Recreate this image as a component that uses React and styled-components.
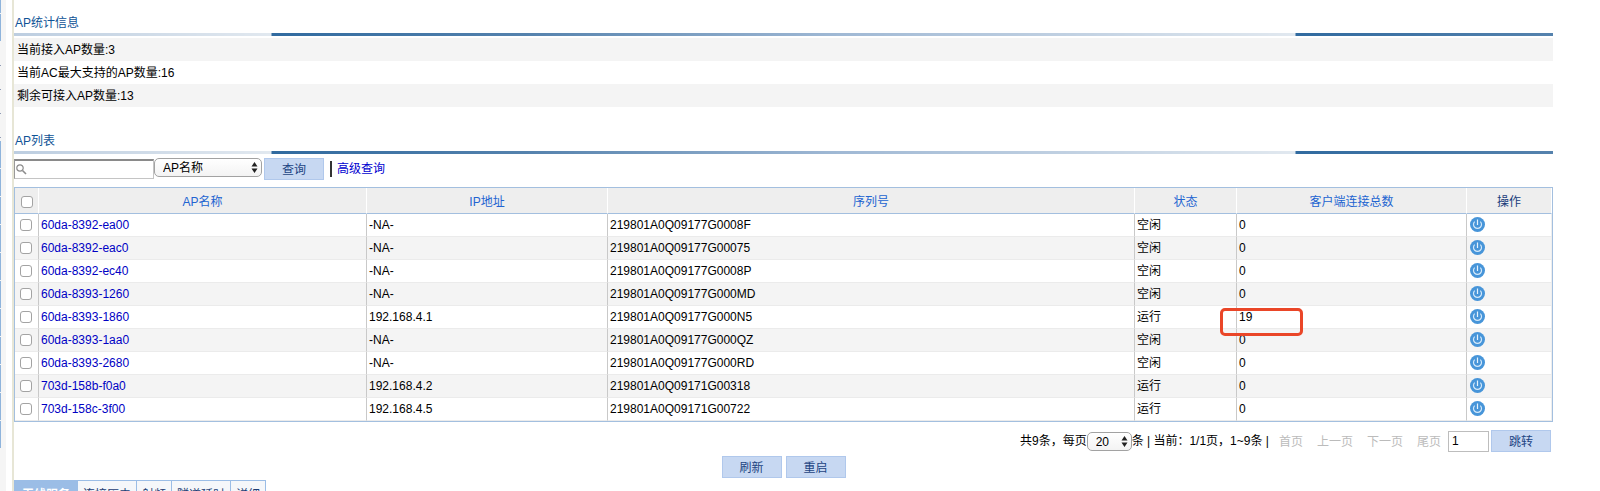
import { useState } from "react"
import styled, { createGlobalStyle, css } from "styled-components"

const GlobalStyle = createGlobalStyle`
  * {
    box-sizing: border-box;
  }

  body {
    margin: 0;
    background: #fff;
    color: #000;
  }

  body, button, input, select {
    font-family: "Liberation Sans", Arial, "Noto Sans CJK SC", sans-serif;
    font-size: 12px;
  }
`

const Layout = styled.div`
  display: flex;
  height: 100vh;
  overflow: hidden;
`

const SideBar = styled.nav`
  flex: none;
  width: 6px;
  background: #f5f5f5;
`

const SideItem = styled.div`
  width: 1px;
  height: ${({ $short }) => ($short ? 14 : 28)}px;
  background: #8fb4dc;
  border-bottom: 1px solid #f5f5f5;
`

const SideSubItem = styled.div`
  width: 1px;
  height: 24px;
  border-bottom: 1px solid #8f9bb5;
`

const SideSubList = styled.div`
  padding: 0 0 3px;
`

const Main = styled.main`
  flex: 1;
  min-width: 0;
  margin-left: 6px;
  padding: 13px 47px 0 0;
  border-left: 2px solid #e7e6d6;
`

const Section = styled.section`
  & + & {
    margin-top: 24px;
  }
`

const SectionTitle = styled.h2`
  margin: 0;
  padding-left: 1px;
  font-size: 12px;
  font-weight: normal;
  line-height: 20px;
  color: #0f5396;
`

const TitleBar = styled.div`
  height: 3px;
  background: linear-gradient(to right, #306a9f, #5582ad 25%, #9fb8d4 55%, #e1e8ef) center / 1024px 3px repeat-x;
`

const StatList = styled.ul`
  margin: 2px 0 0;
  padding: 0;
  list-style: none;
`

const StatItem = styled.li`
  height: 23px;
  padding-left: 3px;
  line-height: 24px;

  &:nth-child(odd) {
    background: #f4f4f4;
  }
`

const Toolbar = styled.form`
  display: flex;
  align-items: flex-start;
  height: 22px;
  margin: 4px 0 7px;
`

const SearchBox = styled.label`
  position: relative;
  width: 140px;
  margin-top: 1px;

  svg {
    position: absolute;
    left: 2px;
    top: 5px;
  }
`

const SearchInput = styled.input`
  display: block;
  width: 100%;
  height: 20px;
  padding: 0 4px 0 16px;
  border: 1px solid #c4c4c4;
  border-top: 2px solid #8a8a8a;
  border-left-color: #999;
  outline: none;
`

const SelectBox = styled.span`
  position: relative;
  width: ${({ $width }) => $width}px;

  svg {
    position: absolute;
    right: 4px;
    top: 4px;
    pointer-events: none;
  }
`

const Select = styled.select`
  display: block;
  width: 100%;
  height: 19px;
  padding: 1px 16px 0 8px;
  border: 1px solid #a2a2a2;
  border-radius: 5px;
  background: linear-gradient(#fff, #f3f3f3);
  color: #000;
  appearance: none;
`

const Button = styled.button`
  width: 60px;
  height: 22px;
  padding: 0 0 2px;
  border: 1px solid #b0c8ec;
  background: #c7d8f2;
  color: #1d4482;
  cursor: pointer;
`

const QueryButton = styled(Button)`
  margin-left: 2px;
`

const AdvancedLink = styled.a`
  margin: 3px 0 0 6px;
  padding-left: 5px;
  border-left: 2px solid #333;
  line-height: 16px;
  color: #0000d0;
  text-decoration: none;
`

const Table = styled.table`
  width: 100%;
  table-layout: fixed;
  border: 1px solid #a3bfdf;
  border-collapse: separate;
  border-spacing: 0;
`

const HeadCell = styled.th`
  height: 26px;
  padding: 2px 0 0;
  border-right: 1px solid #fff;
  border-bottom: 1px solid #a3bfdf;
  background: #eee;
  color: ${({ $plain }) => ($plain ? "#173b7a" : "#2264d1")};
  font-weight: normal;
  line-height: 20px;
`

const Row = styled.tr`
  background: #fff;

  &:nth-child(even) {
    background: #f4f4f4;
  }
`

const Cell = styled.td`
  position: relative;
  height: 23px;
  padding: 0 2px;
  border-right: 1px solid #c9c9c9;
  border-bottom: 1px solid #ebebeb;
  line-height: 20px;

  &:last-child {
    border-right-color: #eee;
  }

  a {
    color: #0000c4;
    text-decoration: none;
  }
`

const CheckCell = styled(Cell)`
  padding: 0 0 0 5px;
`

const CheckBox = styled.input.attrs({ type: "checkbox" })`
  display: block;
  width: 12px;
  height: 12px;
  margin: 0;
  border: 1px solid #a3a3a3;
  border-radius: 3px;
  background: #fff;
  appearance: none;

  &:checked {
    background: #4795d9;
  }

  ${HeadCell} & {
    margin-left: 6px;
  }
`

const Mark = styled.span`
  position: absolute;
  left: -17px;
  top: 2px;
  width: 83px;
  height: 28px;
  border: 3px solid #ea4628;
  border-radius: 5px;
  z-index: 1;
  pointer-events: none;
`

const IconButton = styled.button`
  display: block;
  margin-left: 1px;
  padding: 0 0 1px;
  border: none;
  background: none;
  line-height: 0;
  cursor: pointer;
`

const Pager = styled.div`
  display: flex;
  justify-content: flex-end;
  align-items: center;
  height: 22px;
  margin: 8px 2px 0 0;
  white-space: pre;
`

const PageText = styled.span`
  height: 22px;
  line-height: 22px;
`

const PageLink = styled.button`
  height: 20px;
  margin-right: 14px;
  padding: 0;
  border: none;
  background: none;
  color: #bbb;

  ${({ $last }) => $last && css`
    margin-right: 7px;
  `}
`

const PageLinks = styled.span`
  display: flex;
  height: 22px;
  margin-left: 10px;
`

const PageInput = styled.input`
  width: 41px;
  height: 21px;
  margin-right: 2px;
  padding: 0 3px;
  border: 1px solid #bdbdbd;
`

const Actions = styled.div`
  display: flex;
  justify-content: center;
  gap: 4px;
  margin-top: 4px;
`

const Tabs = styled.div`
  display: inline-flex;
  margin-top: 2px;
  border: solid #9bbde6;
  border-width: 1px 1px 0 0;
`

const Tab = styled.button`
  height: 25px;
  padding: 0 5px;
  border: none;
  border-left: 1px solid #9bbde6;
  background: #f5f7fa;
  color: #1c3d74;

  ${({ $active }) => $active && css`
    padding: 0 7px;
    background: #9bbde6;
    color: #fff;
    font-weight: bold;
  `}
`

const SearchIcon = () => (
  <svg width="11" height="11" viewBox="0 0 11 11" fill="none" stroke="#8c8c8c">
    <circle cx="4" cy="4" r="3.2" strokeWidth="1.2" />
    <path d="M6.5 6.5L10 10" strokeWidth="1.6" />
  </svg>
)

const Arrows = () => (
  <svg width="7" height="11" viewBox="0 0 7 11" fill="#222">
    <path d="M3.5 0L6.5 4.6H0.5zM3.5 11L0.5 6.4H6.5z" />
  </svg>
)

const PowerIcon = () => (
  <svg width="15" height="15" viewBox="0 0 15 15" fill="none">
    <circle cx="7.5" cy="7.5" r="7.5" fill="#4795d9" />
    <path d="M4.7 4.6A4 4 0 1 0 10.3 4.6" stroke="#d5e9fa" strokeWidth="1.2" />
    <path d="M7.5 2.5V8" stroke="#e6f3fd" strokeWidth="1.2" />
  </svg>
)

const stats = ["当前接入AP数量:3", "当前AC最大支持的AP数量:16", "剩余可接入AP数量:13"]

const columns = [
  { title: "AP名称", width: 328 },
  { title: "IP地址", width: 241 },
  { title: "序列号", width: 527 },
  { title: "状态", width: 102 },
  { title: "客户端连接总数", width: 230 },
  { title: "操作", width: 85, plain: true },
]

const aps = [
  { name: "60da-8392-ea00", ip: "-NA-", serial: "219801A0Q09177G0008F", state: "空闲", clients: 0 },
  { name: "60da-8392-eac0", ip: "-NA-", serial: "219801A0Q09177G00075", state: "空闲", clients: 0 },
  { name: "60da-8392-ec40", ip: "-NA-", serial: "219801A0Q09177G0008P", state: "空闲", clients: 0 },
  { name: "60da-8393-1260", ip: "-NA-", serial: "219801A0Q09177G000MD", state: "空闲", clients: 0 },
  { name: "60da-8393-1860", ip: "192.168.4.1", serial: "219801A0Q09177G000N5", state: "运行", clients: 19, marked: true },
  { name: "60da-8393-1aa0", ip: "-NA-", serial: "219801A0Q09177G000QZ", state: "空闲", clients: 0 },
  { name: "60da-8393-2680", ip: "-NA-", serial: "219801A0Q09177G000RD", state: "空闲", clients: 0 },
  { name: "703d-158b-f0a0", ip: "192.168.4.2", serial: "219801A0Q09171G00318", state: "运行", clients: 0 },
  { name: "703d-158c-3f00", ip: "192.168.4.5", serial: "219801A0Q09171G00722", state: "运行", clients: 0 },
]

const tabs = ["无线服务", "连接历史", "射频", "隧道延时", "详细"]

const App = () => {

  const [selected, setSelected] = useState([]);
  const [tab, setTab] = useState(tabs[0]);

  const toggle = (name) => {
    if (selected.includes(name))
      setSelected(selected.filter((n) => n !== name));
    else
      setSelected([...selected, name]);
  }

  const toggleAll = () => {
    setSelected(selected.length === aps.length ? [] : aps.map((ap) => ap.name));
  }

  return (
    <Layout lang="zh-CN">
      <GlobalStyle />
      <SideBar>
        <SideItem $short />
        <SideItem />
        <SideSubList>
          {[0, 1, 2, 3].map((i) => <SideSubItem key={i} />)}
        </SideSubList>
        {[...Array(11).keys()].map((i) => <SideItem key={i} />)}
      </SideBar>
      <Main>
        <Section>
          <SectionTitle>AP统计信息</SectionTitle>
          <TitleBar />
          <StatList>
            {stats.map((text) => <StatItem key={text}>{text}</StatItem>)}
          </StatList>
        </Section>

        <Section>
          <SectionTitle>AP列表</SectionTitle>
          <TitleBar />
          <Toolbar onSubmit={(e) => e.preventDefault()}>
            <SearchBox>
              <SearchInput type="text" aria-label="查询" />
              <SearchIcon />
            </SearchBox>
            <SelectBox $width={108}>
              <Select aria-label="查询条件">
                <option>AP名称</option>
              </Select>
              <Arrows />
            </SelectBox>
            <QueryButton type="submit">查询</QueryButton>
            <AdvancedLink href="#advanced">高级查询</AdvancedLink>
          </Toolbar>

          <Table>
            <colgroup>
              <col width="24" />
              {columns.map((c) => <col key={c.title} width={c.width} />)}
            </colgroup>
            <thead>
              <tr>
                <HeadCell>
                  <CheckBox aria-label="全选" checked={selected.length === aps.length} onChange={toggleAll} />
                </HeadCell>
                {columns.map((c) => <HeadCell key={c.title} $plain={c.plain}>{c.title}</HeadCell>)}
              </tr>
            </thead>
            <tbody>
              {aps.map((ap) => (
                <Row key={ap.name}>
                  <CheckCell>
                    <CheckBox aria-label={ap.name} checked={selected.includes(ap.name)} onChange={() => toggle(ap.name)} />
                  </CheckCell>
                  <Cell><a href={"#" + ap.name}>{ap.name}</a></Cell>
                  <Cell>{ap.ip}</Cell>
                  <Cell>{ap.serial}</Cell>
                  <Cell>{ap.state}</Cell>
                  <Cell>
                    {ap.clients}
                    {ap.marked && <Mark />}
                  </Cell>
                  <Cell>
                    <IconButton type="button" aria-label="重启"><PowerIcon /></IconButton>
                  </Cell>
                </Row>
              ))}
            </tbody>
          </Table>

          <Pager>
            <PageText>共9条，每页</PageText>
            <SelectBox $width={45}>
              <Select aria-label="每页条数" defaultValue="20">
                <option>20</option>
              </Select>
              <Arrows />
            </SelectBox>
            <PageText>条 | 当前：1/1页，1~9条 |</PageText>
            <PageLinks>
              <PageLink type="button">首页</PageLink>
              <PageLink type="button">上一页</PageLink>
              <PageLink type="button">下一页</PageLink>
              <PageLink type="button" $last>尾页</PageLink>
            </PageLinks>
            <PageInput type="text" aria-label="页码" defaultValue="1" />
            <Button type="button">跳转</Button>
          </Pager>

          <Actions>
            <Button type="button">刷新</Button>
            <Button type="button">重启</Button>
          </Actions>

          <Tabs>
            {tabs.map((name) => (
              <Tab key={name} type="button" $active={name === tab} onClick={() => setTab(name)}>{name}</Tab>
            ))}
          </Tabs>
        </Section>
      </Main>
    </Layout>
  );
}

export default App;
